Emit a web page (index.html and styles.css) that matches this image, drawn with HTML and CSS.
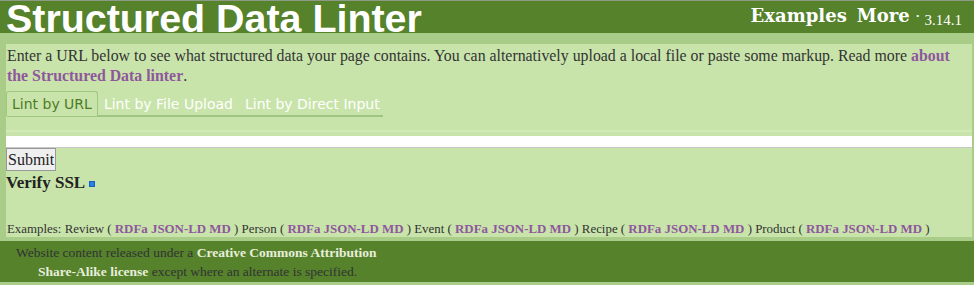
FILE: index.html
```html
<!DOCTYPE html>
<html>
<head>
<meta charset="utf-8">
<link rel="stylesheet" href="styles.css">
</head>
<body>
<header class="top">
  <h1 class="title">Structured Data Linter</h1>
  <nav class="nav">
    <a class="nav-link">Examples</a>
    <a class="nav-link">More</a>
    <span class="dot">·</span>
    <span class="version">3.14.1</span>
  </nav>
</header>
<main class="content">
  <p class="intro">Enter a URL below to see what structured data your page contains. You can alternatively upload a local file or paste some markup. Read more <a class="link">about the Structured Data linter</a>.</p>
  <div class="tabs">
    <span class="tab active">Lint by URL</span>
    <span class="tab">Lint by File Upload</span>
    <span class="tab">Lint by Direct Input</span>
  </div>
  <div class="panel">
    <div class="url-input"></div>
    <button class="submit">Submit</button>
    <div class="verify"><b>Verify SSL</b> <span class="check"></span></div>
  </div>
  <p class="examples">Examples: Review ( <a class="link">RDFa</a> <a class="link">JSON-LD</a> <a class="link">MD</a> ) Person ( <a class="link">RDFa</a> <a class="link">JSON-LD</a> <a class="link">MD</a> ) Event ( <a class="link">RDFa</a> <a class="link">JSON-LD</a> <a class="link">MD</a> ) Recipe ( <a class="link">RDFa</a> <a class="link">JSON-LD</a> <a class="link">MD</a> ) Product ( <a class="link">RDFa</a> <a class="link">JSON-LD</a> <a class="link">MD</a> )</p>
</main>
<footer class="foot">
  <p class="foot-text">Website content released under a <a class="foot-link">Creative Commons Attribution Share-Alike license</a> except where an alternate is specified.</p>
</footer>
</body>
</html>
```
FILE: styles.css
```css
html, body {
  margin: 0;
  padding: 0;
}
body {
  background: #a9cc88;
  border-top: 1px solid #8d9a84;
  font-family: "Liberation Serif", Georgia, serif;
  color: #333;
  height: 284px;
  overflow: hidden;
}
.top {
  background: #55822b;
  height: 32px;
  display: flex;
  justify-content: space-between;
  align-items: flex-start;
  padding: 0 12px 0 6px;
}
.title {
  margin: 0;
  font-family: "Liberation Sans", Arial, sans-serif;
  font-weight: bold;
  font-size: 39.4px;
  line-height: 32px;
  color: #fff;
  white-space: nowrap;
  position: relative;
  top: 1px;
}
.nav {
  display: flex;
  align-items: baseline;
  padding-top: 4px;
  color: #fff;
  font-family: "DejaVu Serif", Georgia, serif;
  font-weight: bold;
}
.nav-link {
  font-size: 18px;
  margin-right: 10px;
}
.dot {
  font-size: 11px;
  margin-right: 5px;
  margin-left: -4px;
  position: relative;
  top: -2px;
}
.version {
  font-family: "Liberation Serif", Georgia, serif;
  font-weight: normal;
  font-size: 15px;
  position: relative;
  top: 3px;
}
.content {
  display: block;
  margin: 11px 2px 0 6px;
  background: #c8e4aa;
  padding: 0 0 1px 1px;
  height: 192px;
}
.intro {
  margin: 0;
  padding-top: 2px;
  font-size: 15.85px;
  line-height: 20px;
}
.link {
  color: #8f579d;
  font-weight: bold;
}
.tabs {
  display: flex;
  margin-top: 5px;
  width: 376px;
  border-bottom: 2px solid #9fc680;
  font-family: "DejaVu Sans", Verdana, sans-serif;
  font-size: 14px;
  white-space: nowrap;
}
.tab {
  flex-shrink: 0;
  color: #fff;
  padding: 3px 5px 3px 5px;
  line-height: 18px;
  border: 1px solid transparent;
  border-bottom: none;
  margin-bottom: -1px;
}
.active {
  color: #4d7a28;
  background: #c8e4aa;
  border-color: #9fc680;
  border-radius: 3px 3px 0 0;
  margin-left: -1px;
}
.panel {
  margin-top: 13px;
  border-top: 2px solid #d2eab8;
  padding-top: 4px;
  margin-left: -1px;
}
.url-input {
  background: #fff;
  height: 11px;
  border-bottom: 1px solid #c8c8c8;
}
.submit {
  display: block;
  font-family: "Liberation Serif", "Times New Roman", serif;
  font-size: 16px;
  padding: 0 1px;
  height: 23px;
  background: #efefef;
  border: 1px solid #999;
  color: #222;
  margin: 0;
}
.verify {
  font-family: "Liberation Serif", "Times New Roman", serif;
  font-size: 17px;
  line-height: 23px;
  color: #222;
  display: flex;
  align-items: center;
  gap: 4px;
}
.check {
  width: 4px;
  height: 4px;
  background: #2b7fe8;
  border: 1px solid #1a5fc0;
  margin-top: 3px;
}
.examples {
  margin: 27px 0 0 0;
  font-size: 12.9px;
  line-height: 16px;
  white-space: nowrap;
}
.foot {
  background: #55822b;
  margin-top: 4px;
  height: 41px;
  padding: 0 0 0 38px;
}
.foot-text {
  margin: 0;
  padding-top: 2px;
  width: 360px;
  text-indent: -22px;
  font-size: 13.5px;
  line-height: 19px;
  color: #333;
}
.foot-link {
  color: #e8eedc;
  font-weight: bold;
}
```
